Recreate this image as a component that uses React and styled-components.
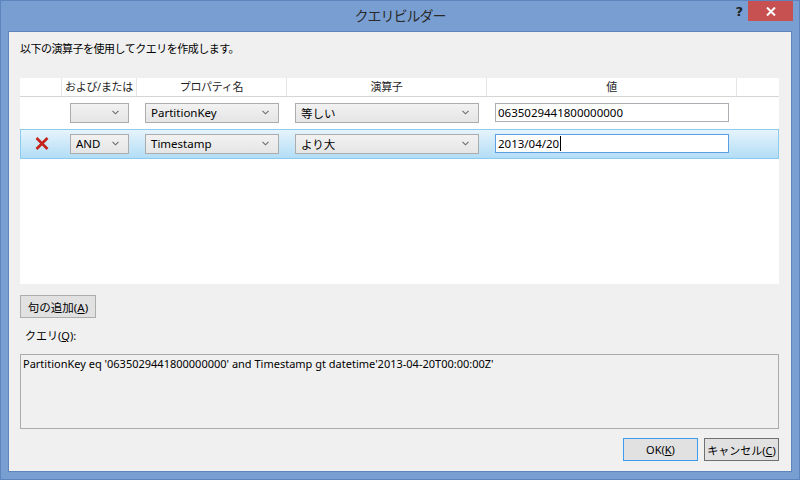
import React from 'react';
import styled, { createGlobalStyle } from 'styled-components';

const GlobalStyle = createGlobalStyle`
  html, body {
    margin: 0;
    padding: 0;
    background: #799fd2;
  }
  * {
    box-sizing: border-box;
  }
`;

const FONT = `"Noto Sans", "Noto Sans CJK JP", sans-serif`;

const Window = styled.div`
  width: 800px;
  height: 480px;
  background: #799fd2;
  border: 1px solid #5e84bd;
  display: flex;
  flex-direction: column;
  padding: 0 7px 7px 7px;
  font-family: ${FONT};
  font-size: 11px;
  color: #000;
`;

const TitleBar = styled.div`
  height: 30px;
  display: flex;
  align-items: flex-start;
  position: relative;
  margin: 0 -7px;
`;

const Title = styled.div`
  flex: 1;
  text-align: center;
  font-size: 14px;
  line-height: 29px;
  color: #2a2a2a;
  letter-spacing: -1px;
`;

const HelpButton = styled.div`
  position: absolute;
  right: 56px;
  top: 3px;
  font-family: "DejaVu Sans", sans-serif;
  font-weight: bold;
  font-size: 13px;
  color: #222;
`;

const CloseButton = styled.div`
  position: absolute;
  right: 6px;
  top: 0;
  width: 45px;
  height: 20px;
  background: #c75050;
  display: flex;
  align-items: center;
  justify-content: center;
`;

const Client = styled.div`
  flex: 1;
  background: #f0f0f0;
  border: 1px solid #5e84bd;
  display: flex;
  flex-direction: column;
  padding: 0 11px 0 11px;
`;

const Instruction = styled.div`
  height: 46px;
  padding-top: 9px;
  line-height: 16px;
  font-size: 11px;
  letter-spacing: -0.5px;
`;

const GridPanel = styled.div`
  height: 206px;
  background: #fff;
  margin-right: 1px;
`;

const Cols = `42px 75px 150px 200px 250px 1fr`;

const HeaderRow = styled.div`
  display: grid;
  grid-template-columns: ${Cols};
  height: 19px;
  border-bottom: 1px solid #d5d5d5;
`;

const HeaderCell = styled.div`
  border-right: 1px solid #e5e5e5;
  text-align: center;
  font-size: 11px;
  line-height: 18px;
  color: #1e1e1e;
  letter-spacing: -0.3px;
  &:last-child {
    border-right: none;
  }
`;

const Row = styled.div`
  display: grid;
  grid-template-columns: ${Cols};
  height: ${(p) => (p.$selected ? '30px' : '32px')};
  align-items: center;
  border: 1px solid ${(p) => (p.$selected ? '#8ccaee' : 'transparent')};
  background: ${(p) =>
    p.$selected ? 'linear-gradient(#e6f4fc, #b2ddf6)' : 'transparent'};
`;

const Cell = styled.div`
  display: flex;
  align-items: center;
  justify-content: ${(p) => (p.$center ? 'center' : 'flex-start')};
  padding-left: ${(p) => p.$pad || 0}px;
  padding-bottom: 1px;
`;

const Combo = styled.div`
  width: ${(p) => p.$w}px;
  height: 20px;
  border: 1px solid #acacac;
  background: linear-gradient(#f2f2f2, #e5e5e5);
  display: flex;
  align-items: center;
  justify-content: space-between;
  padding: 0 9px 0 5px;
  font-size: 11.5px;
`;

const TextBox = styled.div`
  width: 234px;
  height: 19px;
  background: #fff;
  border: 1px solid ${(p) => (p.$focus ? '#5b9fe0' : '#abadb3')};
  display: flex;
  align-items: center;
  padding-left: 2px;
  font-size: 11.5px;
`;

const Caret = styled.span`
  display: inline-block;
  width: 1px;
  height: 15px;
  background: #000;
  margin-left: 1px;
`;

const AddButton = styled.button`
  margin-top: 11px;
  width: 76px;
  height: 23px;
  border: 1px solid #adadad;
  background: #e1e1e1;
  font-family: ${FONT};
  font-size: 11.5px;
  padding: 0;
  color: #000;
`;

const Label = styled.div`
  margin-top: 9px;
  padding-left: 5px;
  font-size: 11px;
  height: 17px;
  line-height: 17px;
`;

const QueryBox = styled.div`
  margin-top: 10px;
  height: 75px;
  border: 1px solid #ababab;
  background: #f0f0f0;
  padding: 0 2px;
  font-size: 11px;
  line-height: 17px;
  margin-right: 1px;
`;

const Footer = styled.div`
  display: flex;
  justify-content: flex-end;
  gap: 6px;
  margin-top: 9px;
  margin-right: 1px;
`;

const DialogButton = styled.button`
  width: 75px;
  height: 23px;
  background: #e1e1e1;
  border: 1px solid ${(p) => (p.$default ? '#3c9cf0' : '#707070')};
  font-family: ${FONT};
  font-size: 11px;
  padding: 0;
  color: #000;
`;

const U = styled.span`
  text-decoration: underline;
`;

const Chevron = () => (
  <svg width="7" height="5" viewBox="0 0 7 5">
    <path d="M0.5 0.8 L3.5 3.8 L6.5 0.8" fill="none" stroke="#6b6b6b" strokeWidth="1.1" />
  </svg>
);

const CloseIcon = () => (
  <svg width="10" height="9" viewBox="0 0 10 9">
    <path d="M1 0.5 L9 8.5 M9 0.5 L1 8.5" stroke="#fff" strokeWidth="2" />
  </svg>
);

const DeleteIcon = () => (
  <svg width="14" height="13" viewBox="0 0 14 13">
    <path d="M1.5 1 L12.5 12 M12.5 1 L1.5 12" stroke="#c4221b" strokeWidth="2.6" />
  </svg>
);

const ClauseRow = ({ selected, andOr, prop, op, value }) => (
  <Row $selected={selected}>
    <Cell $center>{selected && <DeleteIcon />}</Cell>
    <Cell $pad={7}>
      <Combo $w={59}>
        <span>{andOr}</span>
        <Chevron />
      </Combo>
    </Cell>
    <Cell $pad={7}>
      <Combo $w={134}>
        <span>{prop}</span>
        <Chevron />
      </Combo>
    </Cell>
    <Cell $pad={7}>
      <Combo $w={184}>
        <span>{op}</span>
        <Chevron />
      </Combo>
    </Cell>
    <Cell $pad={7}>
      <TextBox $focus={selected}>
        {value}
        {selected && <Caret />}
      </TextBox>
    </Cell>
    <Cell />
  </Row>
);

const App = () => {
  return (
    <>
      <GlobalStyle />
      <Window>
        <TitleBar>
          <Title>クエリビルダー</Title>
          <HelpButton>?</HelpButton>
          <CloseButton>
            <CloseIcon />
          </CloseButton>
        </TitleBar>
        <Client>
          <Instruction>以下の演算子を使用してクエリを作成します。</Instruction>
          <GridPanel>
            <HeaderRow>
              <HeaderCell />
              <HeaderCell>および/または</HeaderCell>
              <HeaderCell>プロパティ名</HeaderCell>
              <HeaderCell>演算子</HeaderCell>
              <HeaderCell>値</HeaderCell>
              <HeaderCell />
            </HeaderRow>
            <ClauseRow andOr="" prop="PartitionKey" op="等しい" value="0635029441800000000" />
            <ClauseRow selected andOr="AND" prop="Timestamp" op="より大" value="2013/04/20" />
          </GridPanel>
          <div>
            <AddButton>
              句の追加(<U>A</U>)
            </AddButton>
          </div>
          <Label>
            クエリ(<U>Q</U>):
          </Label>
          <QueryBox>
            PartitionKey eq '0635029441800000000' and Timestamp gt datetime'2013-04-20T00:00:00Z'
          </QueryBox>
          <Footer>
            <DialogButton $default>
              OK(<U>K</U>)
            </DialogButton>
            <DialogButton>
              キャンセル(<U>C</U>)
            </DialogButton>
          </Footer>
        </Client>
      </Window>
    </>
  );
};

export default App;
